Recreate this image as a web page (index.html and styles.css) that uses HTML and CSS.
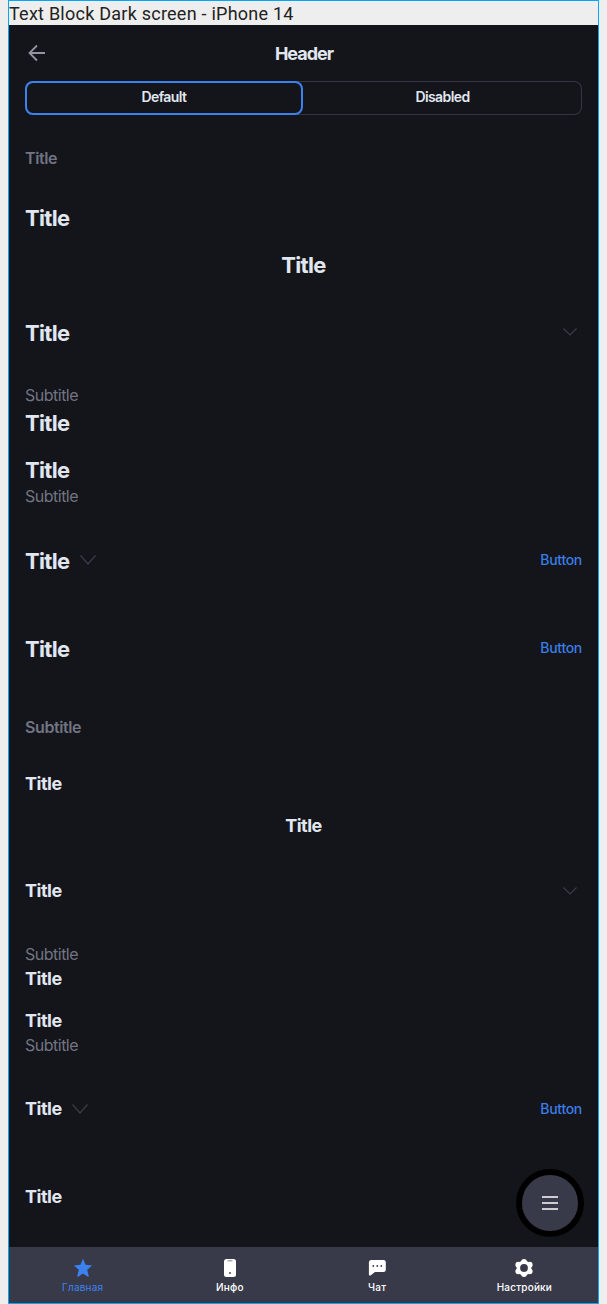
FILE: index.html
```html
<!DOCTYPE html>
<html lang="ru">
<head>
<meta charset="utf-8">
<title>Text Block</title>
<link rel="stylesheet" href="styles.css">
</head>
<body>
<div class="frame">
  <div class="caption">Text Block Dark screen - iPhone 14</div>
  <main class="screen">
    <header class="header">
      <svg class="back" viewBox="0 0 18 18"><path d="M17 9H2M9 1.5L1.5 9L9 16.5"/></svg>
      <h1 class="heading">Header</h1>
      <span class="back"></span>
    </header>
    <div class="tabs">
      <div class="tab tab-active">Default</div>
      <div class="tab">Disabled</div>
    </div>

    <section class="blocks large">
      <div class="label label-title">Title</div>
      <div class="title g36">Title</div>
      <div class="title centered g19">Title</div>
      <div class="row g40"><div class="title">Title</div><svg class="chev-end" viewBox="0 0 14 8"><path d="M.5.5L7 7L13.5.5"/></svg></div>
      <div class="subtitle g38">Subtitle</div>
      <div class="title g4">Title</div>
      <div class="title g19">Title</div>
      <div class="subtitle g2">Subtitle</div>
      <div class="row g41"><div class="title">Title</div><svg class="chev" viewBox="0 0 16 10"><path d="M.5.5L8 9L15.5.5"/></svg><a class="button">Button</a></div>
      <div class="row g60"><div class="title">Title</div><a class="button">Button</a></div>
    </section>

    <section class="blocks small">
      <div class="label">Subtitle</div>
      <div class="title g36">Title</div>
      <div class="title centered g20">Title</div>
      <div class="row g43"><div class="title">Title</div><svg class="chev-end" viewBox="0 0 14 8"><path d="M.5.5L7 7L13.5.5"/></svg></div>
      <div class="subtitle g42">Subtitle</div>
      <div class="title g4">Title</div>
      <div class="title g20">Title</div>
      <div class="subtitle g3">Subtitle</div>
      <div class="row g43"><div class="title">Title</div><svg class="chev" viewBox="0 0 16 10"><path d="M.5.5L8 9L15.5.5"/></svg><a class="button">Button</a></div>
      <div class="title g66">Title</div>
    </section>

    <nav class="nav">
      <div class="item item-active">
        <svg class="icon" viewBox="0 0 20 20"><path d="M10 .8l2.6 6 6.6.6-5 4.400 1.600 6.400c.1.6-.4.8-.9.5L10 15.600l-4.900 3.100c-.5.3-1 .1-.9-.5l1.600-6.400-5-4.400 6.600-.6z"/></svg>
        <span>Главная</span>
      </div>
      <div class="item">
        <svg class="icon" viewBox="0 0 20 20"><rect x="4" y="1" width="12" height="18" rx="2.500"/><path class="cut" d="M7.500 2.700h5"/><circle class="dot" cx="10" cy="15" r=".9"/></svg>
        <span>Инфо</span>
      </div>
      <div class="item">
        <svg class="icon" viewBox="0 0 20 20"><path d="M4 2h12.500a2.300 2.300 0 0 1 2.300 2.300v7.400a2.300 2.300 0 0 1-2.300 2.300H8l-4.200 3.200c-1 .7-1.900.3-1.900-.8V4.300A2.300 2.300 0 0 1 4 2z"/><g class="dot"><circle cx="6.300" cy="8" r=".9"/><circle cx="10.300" cy="8" r=".9"/><circle cx="14.300" cy="8" r=".9"/></g></svg>
        <span>Чат</span>
      </div>
      <div class="item">
        <svg class="icon" viewBox="0 0 20 20"><circle cx="10" cy="10" r="7.400"/><circle cx="10" cy="3.900" r="2.900"/><circle cx="15.700" cy="6.700" r="2.900"/><circle cx="15.700" cy="13.300" r="2.900"/><circle cx="10" cy="16.100" r="2.900"/><circle cx="4.300" cy="13.300" r="2.900"/><circle cx="4.300" cy="6.700" r="2.900"/><circle class="dot" cx="10" cy="10" r="3.900"/></svg>
        <span>Настройки</span>
      </div>
    </nav>
    <div class="fab"><svg class="menu" viewBox="0 0 16 16"><path d="M0 2h16M0 8h16M0 14h16"/></svg></div>
  </main>
</div>
</body>
</html>
```

FILE: styles.css
```css
* { box-sizing: border-box; }
body {
  margin: 0;
  padding: 0 8px;
  background: #eeeeee;
  font-family: Inter, "Liberation Sans", sans-serif;
}
.frame {
  display: flex;
  flex-direction: column;
  width: 591px;
  height: 1304px;
  border: 1px solid #00a8fc;
}
.caption {
  height: 24px;
  font: 18px/25px Roboto, sans-serif;
  letter-spacing: 0.24px;
  color: #222;
  white-space: nowrap;
}
.screen {
  position: relative;
  display: flex;
  flex-direction: column;
  flex: 1;
  background: #14151a;
  color: #e1e7f1;
}
.header {
  display: flex;
  align-items: center;
  justify-content: space-between;
  height: 56px;
  padding: 0 18px 0 19px;
}
.back { width: 18px; height: 18px; fill: none; stroke: #92949f; stroke-width: 1.8; }
.heading { margin: 2px 0 0; font-size: 18px; line-height: 22px; font-weight: 650; letter-spacing: -1px; }
.tabs {
  display: flex;
  height: 34px;
  margin: 0 16px;
  border-radius: 8px;
  box-shadow: inset 0 0 0 1px #343541;
}
.tab { flex: 1; font-size: 14px; line-height: 32px; font-weight: 600; letter-spacing: -0.6px; text-align: center; }
.tab-active { flex: 0 0 278px; border-radius: 8px; box-shadow: inset 0 0 0 2px #3b82f0; }
.blocks { display: flex; flex-direction: column; padding: 0 16px; }
.large { padding-top: 33px; }
.small { padding-top: 54px; }
.label, .subtitle { font-size: 16px; line-height: 20px; color: #717482; letter-spacing: -0.5px; }
.label { font-weight: 600; letter-spacing: -0.4px; }
.title { font-weight: 700; }
.large .title { font-size: 22px; line-height: 28px; letter-spacing: -0.65px; }
.small .title { font-size: 18px; line-height: 22px; letter-spacing: -0.5px; }
.centered { text-align: center; }
.row { display: flex; align-items: center; }
.button { margin-left: auto; font-size: 14px; line-height: 20px; font-weight: 500; letter-spacing: -0.3px; color: #3b7de6; }
.large .button { margin-bottom: 2px; }
.chev, .chev-end { fill: none; stroke: #3b3c49; stroke-width: 1.2; }
.chev { width: 16px; height: 10px; margin-left: 10px; }
.large .chev { margin-bottom: 2px; }
.chev-end { width: 14px; height: 8px; margin: 0 5px 2px auto; }
.small .chev-end { margin-bottom: 0; }
.g2 { margin-top: 2px; }
.g3 { margin-top: 3px; }
.g4 { margin-top: 4px; }
.g19 { margin-top: 19px; }
.g20 { margin-top: 20px; }
.g36 { margin-top: 36px; }
.g38 { margin-top: 38px; }
.g40 { margin-top: 40px; }
.g41 { margin-top: 41px; }
.g42 { margin-top: 42px; }
.g43 { margin-top: 43px; }
.g60 { margin-top: 60px; }
.g66 { margin-top: 66px; }
.nav { display: flex; height: 56px; margin-top: auto; background: #383a49; color: #fff; }
.item {
  display: flex;
  flex: 1;
  flex-direction: column;
  align-items: center;
  padding-top: 11px;
  font-size: 10px;
  line-height: 14px;
  font-weight: 500;
  letter-spacing: 0.2px;
}
.item-active { color: #3b82f0; }
.item-active span { font-weight: 400; }
.icon { width: 20px; height: 20px; margin-bottom: 2px; fill: currentColor; }
.cut { fill: none; stroke: #a5a6ae; stroke-width: 1.5; }
.dot { fill: #383a49; }
.fab {
  position: absolute;
  right: 14px;
  bottom: 66px;
  display: flex;
  align-items: center;
  justify-content: center;
  width: 68px;
  height: 68px;
  border: 6px solid #000;
  border-radius: 50%;
  background: #383a49;
}
.menu { width: 16px; height: 16px; stroke: #fff; stroke-width: 1.6; }
```
